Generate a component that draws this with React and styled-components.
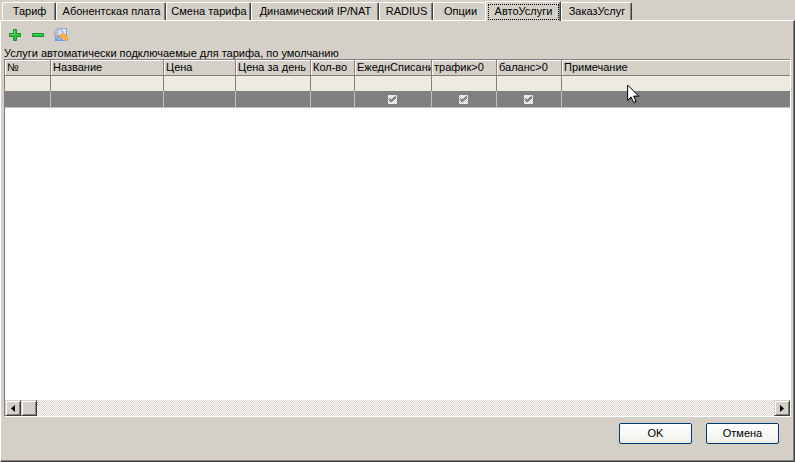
import styled, { createGlobalStyle } from 'styled-components';

const tabs = [
    { name: 'Тариф', width: 54 },
    { name: 'Абонентская плата', width: 110 },
    { name: 'Смена тарифа', width: 85 },
    { name: 'Динамический IP/NAT', width: 128 },
    { name: 'RADIUS', width: 54 },
    { name: 'Опции', width: 54 },
    { name: 'АвтоУслуги', width: 76, active: true },
    { name: 'ЗаказУслуг', width: 71 },
];

const columns = [
    { name: '№', width: 46 },
    { name: 'Название', width: 113 },
    { name: 'Цена', width: 72 },
    { name: 'Цена за день', width: 75 },
    { name: 'Кол-во', width: 44 },
    { name: 'ЕжеднСписани', width: 77, check: true },
    { name: 'трафик>0', width: 65, check: true },
    { name: 'баланс>0', width: 65, check: true },
    { name: 'Примечание' },
];

export default function App() {
    return (
        <Window>
            <GlobalStyle />
            <TabList role="tablist">
                {tabs.map((tab) => (
                    <Tab key={tab.name} role="tab" aria-selected={!!tab.active} $active={tab.active} $width={tab.width}>
                        <TabLabel $active={tab.active}>{tab.name}</TabLabel>
                    </Tab>
                ))}
            </TabList>

            <Page>
                <Toolbar>
                    <ToolButton aria-label="Добавить"><PlusIcon /></ToolButton>
                    <ToolButton aria-label="Удалить"><MinusIcon /></ToolButton>
                    <ToolButton aria-label="Настроить"><ServiceIcon /></ToolButton>
                </Toolbar>

                <Caption id="caption">Услуги автоматически подключаемые для тарифа, по умолчанию</Caption>

                <GridBox>
                    <GridView>
                        <Table aria-labelledby="caption">
                            <colgroup>
                                {columns.map((col) => <Column key={col.name} $width={col.width} />)}
                            </colgroup>
                            <thead>
                                <tr>
                                    {columns.map((col) => <HeadCell key={col.name}>{col.name}</HeadCell>)}
                                </tr>
                            </thead>
                            <tbody>
                                <tr>
                                    {columns.map((col) => <FilterCell key={col.name} />)}
                                </tr>
                                <tr>
                                    {columns.map((col) => (
                                        <SelectedCell key={col.name}>
                                            {col.check && <Check type="checkbox" aria-label={col.name} defaultChecked />}
                                        </SelectedCell>
                                    ))}
                                </tr>
                            </tbody>
                        </Table>
                    </GridView>

                    <ScrollBar>
                        <ScrollButton aria-label="Влево">
                            <svg width="4" height="7" viewBox="0 0 4 7"><path d="M4 0v7L0 3.5z" /></svg>
                        </ScrollButton>
                        <Thumb />
                        <Track />
                        <ScrollButton aria-label="Вправо">
                            <svg width="4" height="7" viewBox="0 0 4 7"><path d="M0 0v7l4-3.5z" /></svg>
                        </ScrollButton>
                    </ScrollBar>
                </GridBox>

                <Footer>
                    <DialogButton>OK</DialogButton>
                    <DialogButton>Отмена</DialogButton>
                </Footer>
            </Page>
            <Pointer />
        </Window>
    );
}

function PlusIcon() {
    return (
        <svg width="14" height="14" viewBox="0 0 14 14">
            <path d="M5.5 1.5h3v4h4v3h-4v4h-3v-4h-4v-3h4z" fill="#2fbf45" stroke="#149426" />
            <path d="M6.5 2.5v4h-4" fill="none" stroke="#6ad86e" />
        </svg>
    );
}

function MinusIcon() {
    return (
        <svg width="14" height="14" viewBox="0 0 14 14">
            <path d="M1.5 5.5h11v3h-11z" fill="#22c04e" stroke="#149426" />
            <path d="M2 6.5h10" stroke="#3fd068" />
        </svg>
    );
}

function ServiceIcon() {
    return (
        <svg width="16" height="16" viewBox="0 0 16 16">
            <path d="M4 1.5h9.5v12h-11v-8z" fill="#dbe7fb" stroke="#7f9fea" />
            <path d="M2 9h5l4 5H2z" fill="#6f97f0" />
            <path d="M3 10l4 3" stroke="#c5d7fb" />
            <path d="M1 5l2 1 2-1V2l-1-1 3 0 3 3 0 3-2 2-4 0-3-2z" fill="#c3c8cf" stroke="#9da4b0" strokeWidth=".7" />
            <path d="M6 4l2 3" stroke="#f4f6f8" strokeWidth="1.5" />
            <path d="M6 9l5-3 4 5v2l-2 1-3-3-3 1z" fill="#f9b13a" stroke="#e39a35" strokeWidth=".6" />
        </svg>
    );
}

function Pointer() {
    return (
        <PointerArrow width="14" height="21" viewBox="0 0 14 21" aria-hidden="true">
            <path d="M1.5 2v15.5l3.7-3.6 2.4 5.8 3-1.2-2.4-5.5h5.3z" fill="#555" opacity=".6" />
            <path d="M.6 1v15.3l3.5-3.3 2.4 5.4 2.5-1.1-2.4-5.2h5.1z" fill="#fff" stroke="#000" />
        </PointerArrow>
    );
}

const GlobalStyle = createGlobalStyle`
    * {
        box-sizing: border-box;
    }

    body {
        margin: 0;
        background: #d4d0c8;
        color: #000;
    }

    body, button, input {
        font-family: "Liberation Sans", Arial, sans-serif;
        font-size: 11px;
        line-height: 13px;
    }

    button {
        padding: 0;
        color: #000;
    }

    svg {
        display: block;
    }
`;

const Window = styled.div`
    position: relative;
    display: flex;
    flex-direction: column;
    min-height: 100vh;
    background: #d4d0c8;
`;

const TabList = styled.div`
    display: flex;
    align-items: flex-end;
    height: 20px;
    padding-left: 2px;
`;

const Tab = styled.button`
    position: relative;
    flex: none;
    width: ${(props) => props.$width}px;
    height: ${(props) => props.$active ? 20 : 18}px;
    margin: ${(props) => props.$active ? '0 0 -1px -2px' : 0};
    z-index: ${(props) => props.$active ? 1 : 0};
    background: #d4d0c8;
    border: 1px solid #fff;
    border-right-color: #404040;
    border-bottom: none;
    border-radius: 2px 2px 0 0;
    box-shadow: inset -1px 0 #808080;
    white-space: nowrap;
`;

const TabLabel = styled.span`
    display: block;
    margin: 0 1px 0 2px;
    padding-bottom: 1px;
    border: 1px ${(props) => props.$active ? 'dotted #000' : 'solid transparent'};
`;

const Page = styled.div`
    display: flex;
    flex: 1;
    flex-direction: column;
    padding: 0 3px;
    border: 1px solid #fff;
    border-right-color: #404040;
    border-bottom-color: #404040;
    box-shadow: inset -1px -1px #808080;
`;

const Toolbar = styled.div`
    display: flex;
    align-items: center;
    gap: 7px;
    height: 26px;
    padding: 2px 0 0 3px;
`;

const ToolButton = styled.button`
    display: flex;
    align-items: center;
    justify-content: center;
    width: 16px;
    height: 16px;
    background: none;
    border: none;
`;

const Caption = styled.div`
    height: 12px;
    white-space: nowrap;
`;

const GridBox = styled.div`
    display: flex;
    flex: 1;
    flex-direction: column;
    background: #fff;
    border: 1px solid #808080;
    border-right-color: #fff;
    border-bottom-color: #fff;
`;

const GridView = styled.div`
    flex: 1;
    overflow: hidden;
`;

const Table = styled.table`
    width: 100%;
    table-layout: fixed;
    border-collapse: separate;
    border-spacing: 0;
`;

const Column = styled.col`
    width: ${(props) => props.$width ? `${props.$width}px` : 'auto'};
`;

const HeadCell = styled.th`
    height: 16px;
    padding: 0 0 0 2px;
    overflow: hidden;
    background: #d4d0c8;
    border-right: 1px solid #808080;
    border-bottom: 1px solid #808080;
    box-shadow: inset 1px 1px #fff;
    font-weight: normal;
    text-align: left;
    white-space: nowrap;

    &:last-child {
        border-right: none;
    }
`;

const FilterCell = styled.td`
    height: 15px;
    padding: 0;
    background: #eee9e1;
    border-right: 1px solid #808080;

    &:last-child {
        border-right: none;
    }
`;

const SelectedCell = styled.td`
    height: 17px;
    padding: 0 1px 0 0;
    background: #808080;
    border-right: 1px solid #c0c0c0;
    border-bottom: 1px solid #c0c0c0;
    line-height: 0;
    text-align: center;

    &:last-child {
        border-right: none;
    }
`;

const Check = styled.input`
    appearance: none;
    display: block;
    width: 9px;
    height: 9px;
    margin: 0 auto;
    background: repeating-conic-gradient(#fff 0 25%, #d4d0c8 0 50%) 0 0 / 2px 2px;

    &:checked::after {
        content: '';
        display: block;
        height: 9px;
        background: #808080;
        clip-path: polygon(1px 3px, 3px 5px, 8px 1px, 8px 4px, 3px 8px, 1px 6px);
    }
`;

const ScrollBar = styled.div`
    display: flex;
    height: 16px;
`;

const ScrollButton = styled.button`
    display: flex;
    align-items: center;
    justify-content: center;
    width: 16px;
    height: 16px;
    background: #d4d0c8;
    border: 1px solid #d4d0c8;
    border-right-color: #404040;
    border-bottom-color: #404040;
    box-shadow: inset 1px 1px #fff, inset -1px -1px #808080;
`;

const Thumb = styled.div`
    width: 16px;
    background: #d4d0c8;
    border: 1px solid #d4d0c8;
    border-right-color: #404040;
    border-bottom-color: #404040;
    box-shadow: inset 1px 1px #fff, inset -1px -1px #808080;
`;

const Track = styled.div`
    flex: 1;
    background: repeating-conic-gradient(#fff 0 25%, #d4d0c8 0 50%) 0 0 / 2px 2px;
`;

const Footer = styled.div`
    display: flex;
    justify-content: flex-end;
    gap: 14px;
    padding: 6px 12px 17px 0;
`;

const DialogButton = styled.button`
    width: 73px;
    height: 21px;
    background: linear-gradient(#fff, #f4f3ef 80%, #ece9e2);
    border: 1px solid #003c74;
    border-radius: 2px;
`;

const PointerArrow = styled.svg`
    position: absolute;
    top: 84px;
    left: 627px;
    pointer-events: none;
`;
